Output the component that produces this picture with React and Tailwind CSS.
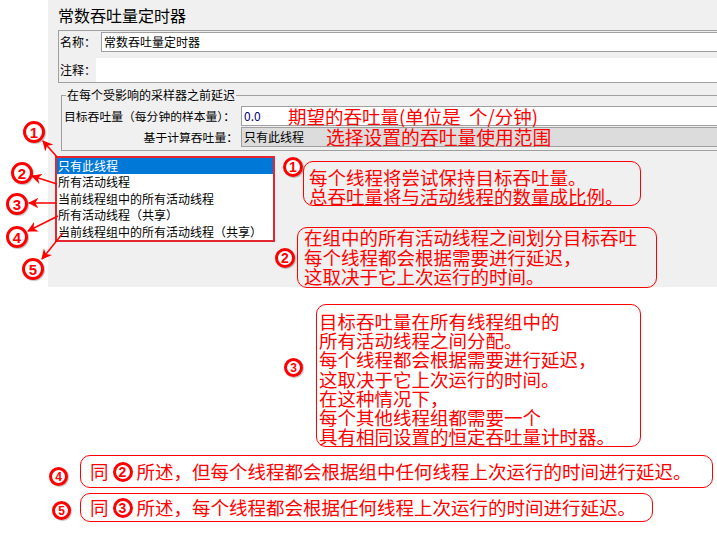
import React from "react";

const Badge = ({ n, className }) => (
  <div
    className={`absolute flex items-center justify-center rounded-full border-[3px] border-[#ff0000] bg-white text-[#ff0000] font-bold font-['Liberation_Sans',sans-serif] leading-none shadow-[1px_1px_1px_rgba(0,0,0,0.25)] ${className}`}
  >
    {n}
  </div>
);

const InlineBadge = ({ n }) => (
  <span className="inline-flex w-[20px] h-[20px] items-center justify-center rounded-full border-[3px] border-[#ff0000] bg-white text-[#ff0000] text-[14px] font-bold font-['Liberation_Sans',sans-serif] leading-none mx-[4px]">
    {n}
  </span>
);

const Note = ({ className, children }) => (
  <div
    className={`absolute border border-[#ff0000] rounded-[10px] text-[#ff0000] text-[18.5px] ${className}`}
  >
    {children}
  </div>
);

const options = [
  "只有此线程",
  "所有活动线程",
  "当前线程组中的所有活动线程",
  "所有活动线程（共享）",
  "当前线程组中的所有活动线程（共享）",
];

export default function App() {
  return (
    <div className="relative w-[717px] h-[540px] bg-white overflow-hidden font-['Noto_Sans_CJK_SC',sans-serif] text-black">
      {/* settings panel */}
      <div className="ml-[48px] h-[287px] bg-[#f0f0f0] pl-[10px] pt-[4px]">
        <h1 className="text-[16px] leading-[22px]">常数吞吐量定时器</h1>

        <div className="mt-[4px] w-[700px] h-[53px] border border-[#a0a0a0] pt-[1px]">
          <div className="flex items-center h-[20px]">
            <span className="w-[42px] pl-[1px] text-[12px]">名称：</span>
            <div className="flex-1 h-[20px] bg-white border border-[#a0a0a0] flex items-center pl-[2px] text-[12px]">
              常数吞吐量定时器
            </div>
          </div>
          <div className="flex items-center h-[24px] mt-[6px]">
            <span className="w-[37px] pl-[1px] text-[12px]">注释：</span>
            <div className="flex-1 h-[24px] bg-white"></div>
          </div>
        </div>

        <div className="relative ml-[3px] mt-[12px] w-[700px] h-[56px] border border-[#a0a0a0] pt-[10px]">
          <span className="absolute left-[4px] top-[-9px] bg-[#f0f0f0] px-[1px] text-[12px] leading-[16px]">
            在每个受影响的采样器之前延迟
          </span>
          <div className="flex items-center h-[20px]">
            <span className="w-[179px] pl-[2px] text-[11.8px] whitespace-nowrap">
              目标吞吐量（每分钟的样本量）：
            </span>
            <div className="flex-1 h-[20px] bg-white border border-[#a0a0a0] flex items-center pl-[2px]">
              <span className="w-[44px] text-[12px] text-[#000080]">0.0</span>
              <span className="text-[18.5px] leading-none text-[#ff0000]">
                期望的吞吐量(单位是 &nbsp;个/分钟)
              </span>
            </div>
          </div>
          <div className="flex items-center h-[20px] mt-[1px]">
            <span className="w-[179px] pr-[3px] text-[11.8px] text-right whitespace-nowrap">
              基于计算吞吐量：
            </span>
            <div className="flex-1 h-[20px] bg-[#dcdcdc] border border-[#a0a0a0] flex items-center pl-[2px]">
              <span className="w-[82px] text-[12px]">只有此线程</span>
              <span className="text-[18.8px] leading-none text-[#ff0000]">
                选择设置的吞吐量使用范围
              </span>
            </div>
          </div>
        </div>
      </div>

      {/* drop-down list */}
      <div className="absolute left-[55px] top-[156px] w-[220px] h-[86px] border-2 border-[#e3262f] bg-white text-[12px] whitespace-nowrap">
        {options.map((o, i) => (
          <div
            key={o}
            className={`h-[16.4px] leading-[16.4px] pl-[1px] ${i === 0 ? "bg-[#0078d7] text-white" : ""}`}
          >
            {o}
          </div>
        ))}
      </div>

      {/* arrows */}
      <svg className="absolute left-0 top-0 pointer-events-none" width="717" height="540">
        <defs>
          <marker id="ah" viewBox="0 0 10 10" refX="9" refY="5" markerWidth="7" markerHeight="7" orient="auto">
            <path d="M0,0 L10,5 L0,10 L3,5 z" fill="#ff0000" />
          </marker>
        </defs>
        <line x1="57" y1="157" x2="43" y2="141" stroke="#ff0000" strokeWidth="1.5" markerEnd="url(#ah)" />
        <line x1="57" y1="184" x2="32" y2="176" stroke="#ff0000" strokeWidth="1.5" markerEnd="url(#ah)" />
        <line x1="56" y1="203" x2="29" y2="203" stroke="#ff0000" strokeWidth="1.5" markerEnd="url(#ah)" />
        <line x1="58" y1="216" x2="28" y2="231" stroke="#ff0000" strokeWidth="1.5" markerEnd="url(#ah)" />
        <line x1="63" y1="233" x2="42" y2="259" stroke="#ff0000" strokeWidth="1.5" markerEnd="url(#ah)" />
      </svg>

      {/* left badges */}
      <Badge n="1" className="left-[23px] top-[121px] w-[22px] h-[22px] text-[15px]" />
      <Badge n="2" className="left-[11px] top-[162px] w-[22px] h-[22px] text-[15px]" />
      <Badge n="3" className="left-[6px] top-[193px] w-[22px] h-[22px] text-[15px]" />
      <Badge n="4" className="left-[6px] top-[226px] w-[22px] h-[22px] text-[15px]" />
      <Badge n="5" className="left-[22px] top-[258px] w-[22px] h-[22px] text-[15px]" />

      {/* notes */}
      <Badge n="1" className="left-[283px] top-[157px] w-[20px] h-[20px] text-[14px]" />
      <Note className="left-[303px] top-[161px] w-[338px] h-[45px] pl-[5px] pt-[6px] leading-[18.5px]">
        每个线程将尝试保持目标吞吐量。
        <br />
        总吞吐量将与活动线程的数量成比例。
      </Note>

      <Badge n="2" className="left-[275px] top-[248px] w-[20px] h-[20px] text-[14px]" />
      <Note className="left-[297px] top-[227px] w-[360px] h-[61px] pl-[6px] leading-[19.5px]">
        在组中的所有活动线程之间划分目标吞吐
        <br />
        每个线程都会根据需要进行延迟，
        <br />
        这取决于它上次运行的时间。
      </Note>

      <Badge n="3" className="left-[284px] top-[358px] w-[19px] h-[19px] text-[12px] border-[2px]" />
      <Note className="left-[316px] top-[304px] w-[325px] h-[143px] pl-[2px] pt-[7px] leading-[19.2px]">
        目标吞吐量在所有线程组中的
        <br />
        所有活动线程之间分配。
        <br />
        每个线程都会根据需要进行延迟，
        <br />
        这取决于它上次运行的时间。
        <br />
        在这种情况下，
        <br />
        每个其他线程组都需要一个
        <br />
        具有相同设置的恒定吞吐量计时器。
      </Note>

      <Badge n="4" className="left-[49px] top-[467px] w-[19px] h-[19px] text-[12px] border-[2px]" />
      <Note className="left-[80px] top-[455px] w-[633px] h-[33px] pl-[9px] flex items-center whitespace-nowrap">
        同<InlineBadge n="2" />所述，但每个线程都会根据组中任何线程上次运行的时间进行延迟。
      </Note>

      <Badge n="5" className="left-[52px] top-[501px] w-[19px] h-[19px] text-[12px] border-[2px]" />
      <Note className="left-[80px] top-[493px] w-[573px] h-[29px] pl-[9px] flex items-center whitespace-nowrap">
        同<InlineBadge n="3" />所述，每个线程都会根据任何线程上次运行的时间进行延迟。
      </Note>
    </div>
  );
}
